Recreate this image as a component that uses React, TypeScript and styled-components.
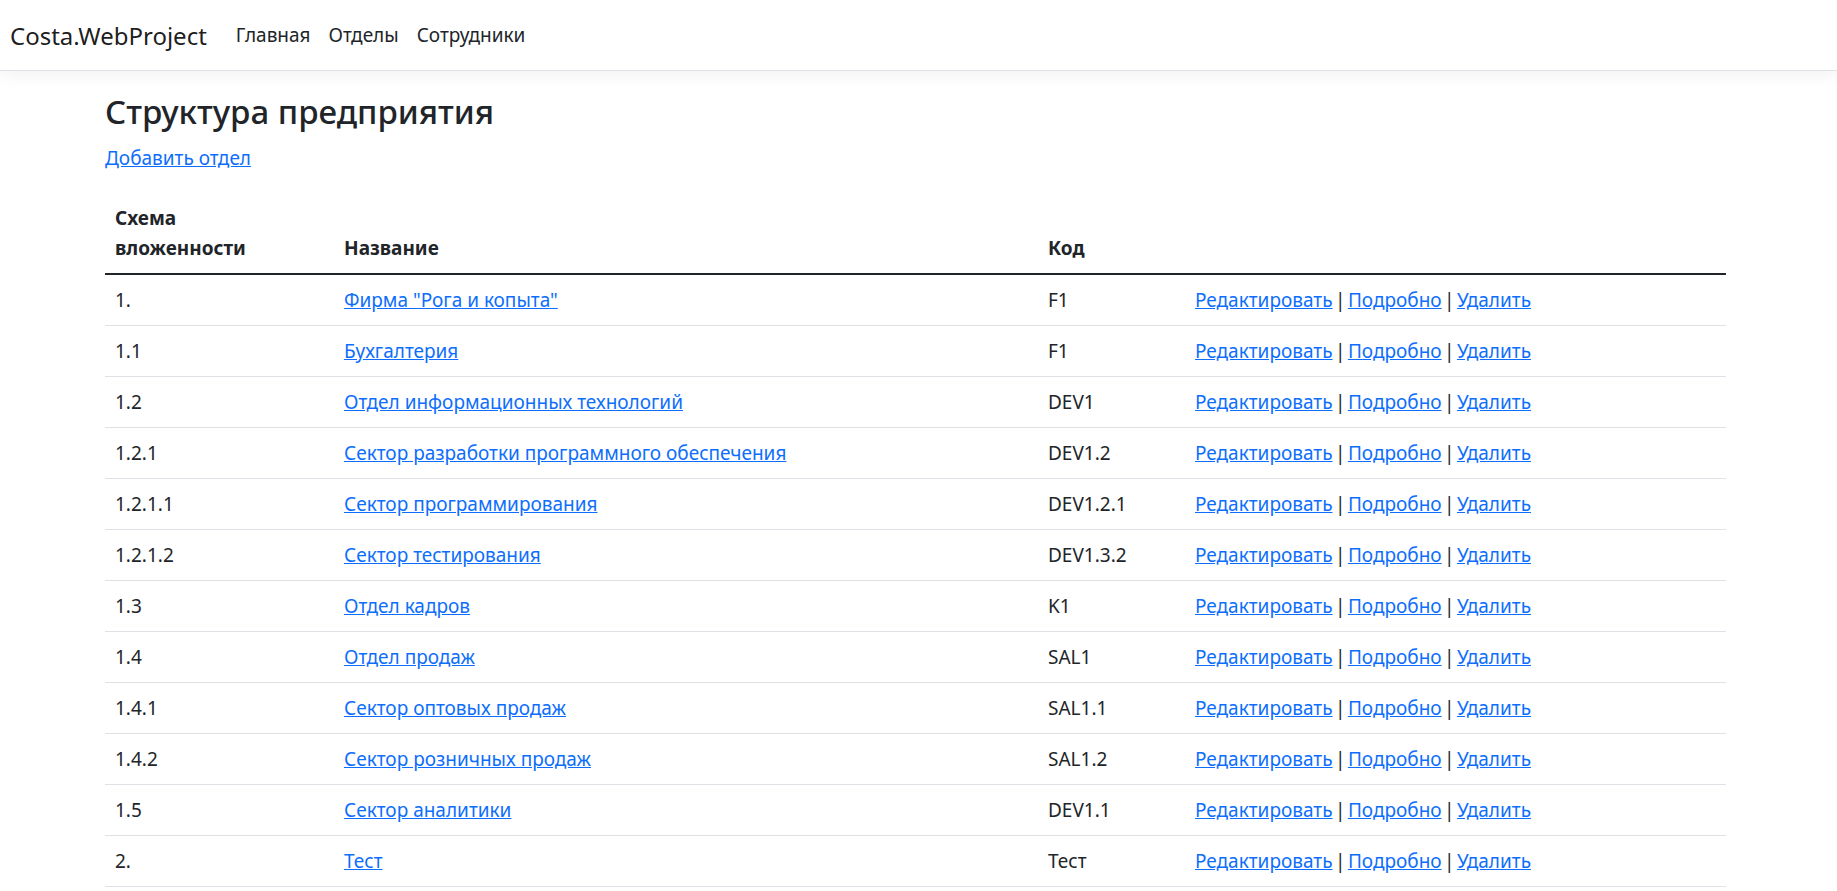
import React from 'react';
import styled, { createGlobalStyle } from 'styled-components';

const GlobalStyle = createGlobalStyle`
    html, body {
        margin: 0;
        padding: 0;
        background: #fff;
    }
    body {
        font-family: "Noto Sans", "Open Sans", sans-serif;
        font-size: 19px;
        line-height: 30px;
        color: #212529;
        overflow-x: hidden;
    }
    * {
        box-sizing: border-box;
    }
`;

interface Department {
    path: string;
    name: string;
    code: string;
}

const departments: Department[] = [
    { path: '1.', name: 'Фирма "Рога и копыта"', code: 'F1' },
    { path: '1.1', name: 'Бухгалтерия', code: 'F1' },
    { path: '1.2', name: 'Отдел информационных технологий', code: 'DEV1' },
    { path: '1.2.1', name: 'Сектор разработки программного обеспечения', code: 'DEV1.2' },
    { path: '1.2.1.1', name: 'Сектор программирования', code: 'DEV1.2.1' },
    { path: '1.2.1.2', name: 'Сектор тестирования', code: 'DEV1.3.2' },
    { path: '1.3', name: 'Отдел кадров', code: 'K1' },
    { path: '1.4', name: 'Отдел продаж', code: 'SAL1' },
    { path: '1.4.1', name: 'Сектор оптовых продаж', code: 'SAL1.1' },
    { path: '1.4.2', name: 'Сектор розничных продаж', code: 'SAL1.2' },
    { path: '1.5', name: 'Сектор аналитики', code: 'DEV1.1' },
    { path: '2.', name: 'Тест', code: 'Тест' },
];

const navItems = ['Главная', 'Отделы', 'Сотрудники'];

const App = () => {
    return (
        <>
            <GlobalStyle />
            <Navbar>
                <Brand href="#">Costa.WebProject</Brand>
                <NavList>
                    {navItems.map((item) => (
                        <NavLink key={item} href="#">{item}</NavLink>
                    ))}
                </NavList>
            </Navbar>
            <Main>
                <Container>
                    <Title>Структура предприятия</Title>
                    <Paragraph>
                        <Link href="#">Добавить отдел</Link>
                    </Paragraph>
                    <Table>
                        <colgroup>
                            <col style={{ width: '229px' }} />
                            <col style={{ width: '704px' }} />
                            <col style={{ width: '147px' }} />
                            <col />
                        </colgroup>
                        <thead>
                            <tr>
                                <Th>Схема<br />вложенности</Th>
                                <Th>Название</Th>
                                <Th>Код</Th>
                                <Th></Th>
                            </tr>
                        </thead>
                        <tbody>
                            {departments.map((d, i) => (
                                <tr key={i}>
                                    <Td>{d.path}</Td>
                                    <Td><Link href="#">{d.name}</Link></Td>
                                    <Td>{d.code}</Td>
                                    <ActionsCell>
                                        <Link href="#">Редактировать</Link> | <Link href="#">Подробно</Link> | <Link href="#">Удалить</Link>
                                    </ActionsCell>
                                </tr>
                            ))}
                        </tbody>
                    </Table>
                </Container>
            </Main>
        </>
    );
};

export default App;

const Navbar = styled.nav`
    display: flex;
    align-items: center;
    height: 71px;
    padding: 10px 10px;
    background: #fff;
    border-bottom: 1px solid #dee2e6;
    box-shadow: 0 5px 15px rgba(0, 0, 0, 0.05);
    margin-bottom: 20px;
`;

const Brand = styled.a`
    font-size: 24px;
    line-height: 37px;
    padding: 6px 0;
    margin-right: 20px;
    color: rgba(0, 0, 0, 0.9);
    text-decoration: none;
    white-space: nowrap;
`;

const NavList = styled.div`
    display: flex;
    align-items: center;
`;

const NavLink = styled.a`
    padding: 10px 9px;
    color: #212529;
    text-decoration: none;
`;

const Main = styled.main`
    padding-right: 6px;
`;

const Container = styled.div`
    max-width: 1621px;
    margin: 0 auto;
`;

const Title = styled.h3`
    margin: 0 0 10px;
    font-size: 33px;
    line-height: 42px;
    font-weight: 500;
`;

const Paragraph = styled.p`
    margin: 0 0 20px;
`;

const Link = styled.a`
    color: #0d6efd;
    text-decoration: underline;
`;

const Table = styled.table`
    width: 100%;
    table-layout: fixed;
    border-collapse: collapse;
    margin-bottom: 20px;
`;

const Th = styled.th`
    text-align: left;
    vertical-align: bottom;
    font-weight: 700;
    padding: 10px 10px;
    border-bottom: 2.5px solid #212529;
`;

const Td = styled.td`
    padding: 10px 10px;
    vertical-align: top;
    border-bottom: 1px solid #dee2e6;
    white-space: nowrap;
`;

const ActionsCell = styled(Td)`
    word-spacing: -2.5px;
`;
